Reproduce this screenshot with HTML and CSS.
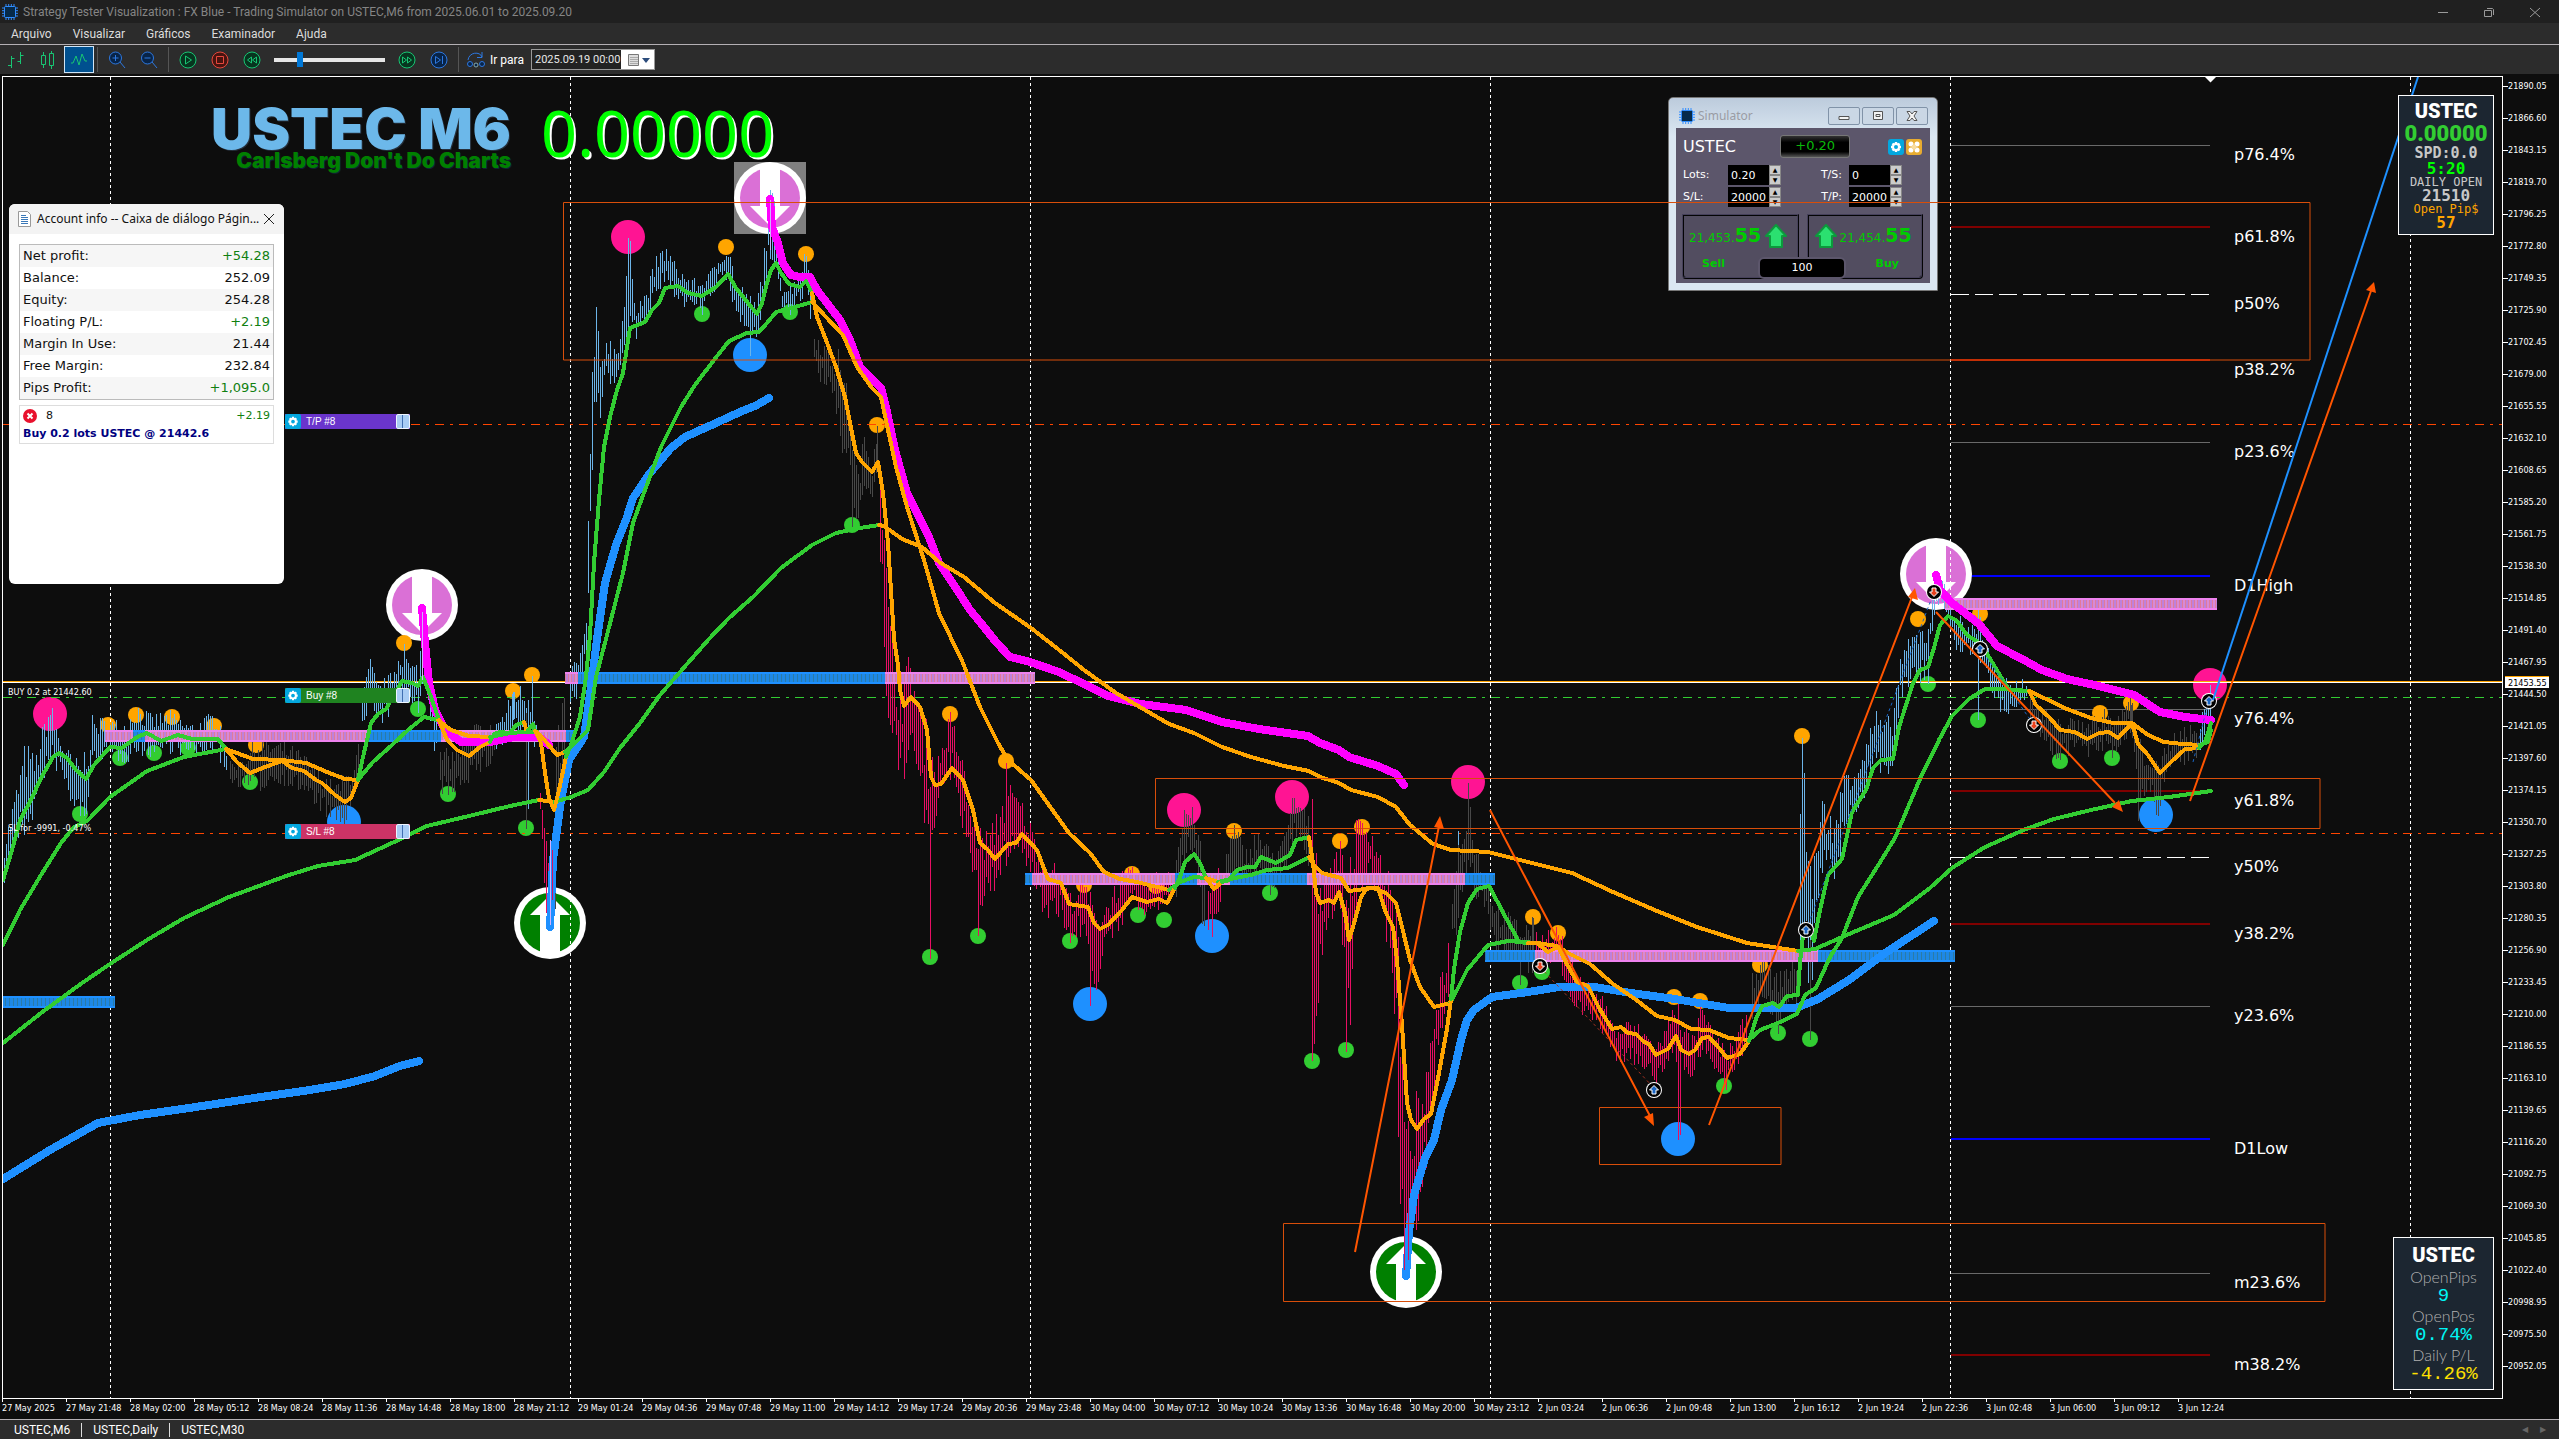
FILE: index.html
```html
<!DOCTYPE html>
<html lang="pt">
<head>
<meta charset="utf-8">
<title>Strategy Tester Visualization</title>
<link rel="stylesheet" href="styles.css">
</head>
<body>
<svg class="defs" aria-hidden="true">
  <symbol id="chip" viewBox="0 0 16 16"><path d="M4 0v16M6.7 0v16M9.3 0v16M12 0v16M0 4h16M0 6.700h16M0 9.300h16M0 12h16" stroke="#2f8cff" fill="none"/><rect x="2.500" y="2.500" width="11" height="11" rx="1" fill="#062a4a" stroke="#2f8cff"/></symbol>
  <symbol id="gear" viewBox="0 0 16 16"><path d="M8 3v10M3 8h10M4.500 4.500l7 7M11.500 4.500l-7 7" stroke="#fff" stroke-width="2.400"/><circle cx="8" cy="8" r="3" fill="#04a7de" stroke="#fff" stroke-width="2"/></symbol>
  <symbol id="up" viewBox="0 0 22 24"><path d="M11 1L21 12h-4v11H5V12H1z" fill="#2be070" stroke="#0c9a3c" stroke-width="2" stroke-linejoin="round"/></symbol>
</svg>

<header class="titlebar">
  <svg class="app-icon"><use href="#chip"/></svg>
  <h1>Strategy Tester Visualization : FX Blue - Trading Simulator on USTEC,M6 from 2025.06.01 to 2025.09.20</h1>
  <div class="caption-buttons">
    <button aria-label="Minimizar"><svg viewBox="0 0 12 12"><path d="M1 6.500h10"/></svg></button>
    <button aria-label="Restaurar"><svg viewBox="0 0 12 12"><path d="M1.500 4.500h7v6h-7zM4 2.500h5.500l1 1V9"/></svg></button>
    <button aria-label="Fechar"><svg viewBox="0 0 12 12"><path d="M1 2l10 9M11 2L1 11"/></svg></button>
  </div>
</header>

<nav class="menu">
  <a href="#">Arquivo</a><a href="#">Visualizar</a><a href="#">Gráficos</a><a href="#">Examinador</a><a href="#">Ajuda</a>
</nav>

<div class="toolbar">
  <button class="tool" aria-label="Barras"><svg viewBox="0 0 18 18" class="green"><path d="M4.500 5v12M1 14.500h3.500M4.500 7.500h3M13.500 1v12M10.500 10.500h3M13.500 4.500h3"/></svg></button>
  <button class="tool" aria-label="Velas"><svg viewBox="0 0 18 18" class="green"><path d="M4.500 1v3M4.500 14v3M2.500 4.500h4v9h-4zM12.500 0v2M12.500 15v3M10.500 2.500h4v12h-4z"/></svg></button>
  <button class="tool active" aria-label="Linha"><svg viewBox="0 0 18 18" class="green"><path d="M1 12h2l3-7 3 9 3-11 3 7h2"/></svg></button>
  <span class="sep"></span>
  <button class="tool" aria-label="Ampliar"><svg viewBox="0 0 18 18" class="blue"><circle cx="7.500" cy="7" r="6"/><path d="M4.500 7h6M7.500 4v6M12 11l5 6"/></svg></button>
  <button class="tool" aria-label="Reduzir"><svg viewBox="0 0 18 18" class="blue"><circle cx="7.500" cy="7" r="6"/><path d="M4.500 7h6M12 11l5 6"/></svg></button>
  <span class="sep"></span>
  <button class="tool" aria-label="Iniciar"><svg viewBox="0 0 18 18" class="green"><circle cx="9" cy="9" r="8"/><path d="M6.500 5l6 4-6 4z"/></svg></button>
  <button class="tool" aria-label="Parar"><svg viewBox="0 0 18 18" class="red"><circle cx="9" cy="9" r="8"/><path d="M5.500 5.500h7v7h-7z"/></svg></button>
  <button class="tool" aria-label="Mais lento"><svg viewBox="0 0 18 18" class="green"><circle cx="9" cy="9" r="8"/><path d="M8.500 6l-4 3 4 3zM13.500 6l-4 3 4 3z"/></svg></button>
  <input class="speed" type="range" min="0" max="100" value="22" aria-label="Velocidade">
  <button class="tool" aria-label="Mais rápido"><svg viewBox="0 0 18 18" class="green"><circle cx="9" cy="9" r="8"/><path d="M4.500 6l4 3-4 3zM9.500 6l4 3-4 3z"/></svg></button>
  <button class="tool" aria-label="Avançar"><svg viewBox="0 0 18 18" class="blue"><circle cx="9" cy="9" r="8"/><path d="M5.500 5.500l5 3.500-5 3.500zM12.500 5v8"/></svg></button>
  <span class="sep"></span>
  <svg class="jump blue" viewBox="0 0 20 18"><path d="M2 9C3 1 14 0 16 6M16 1v5.500h-5"/><circle cx="4" cy="13" r="2.500"/><circle cx="16" cy="13" r="2.500"/><circle cx="10" cy="14" r="2" stroke="#8aa"/></svg>
  <label for="goto">Ir para</label>
  <div class="date-box">
    <input id="goto" value="2025.09.19 00:00">
    <button aria-label="Calendário"><svg viewBox="0 0 26 18"><path d="M3.500 3.500h10v11h-10z" fill="#ddd" stroke="#777"/><path d="M5 6.500h8M5 8.500h8M5 10.500h8M5 12.500h8" stroke="#aaa"/><path d="M17 7h8l-4 5z" fill="#2c4c7c"/></svg></button>
  </div>
</div>

<main class="workspace">
  <section class="plot" aria-label="Gráfico USTEC M6">
    <svg class="layer" viewBox="3 77 2499 1321" preserveAspectRatio="none">
      <defs>
        <pattern id="pinkband" width="6" height="12" patternUnits="userSpaceOnUse"><path d="M0 0h6v12H0z" fill="#d58ad8"/><path d="M1.500 0v12M4.500 0v12" stroke="#e07a9c"/><path d="M3 0v12" stroke="#a878e0"/></pattern>
        <pattern id="blueband" width="4" height="12" patternUnits="userSpaceOnUse"><path d="M0 0h4v12H0z" fill="#1e88e5"/><path d="M1.500 0v12" stroke="#2a7ba8"/></pattern>
        <g id="down"><circle r="36" fill="#fff"/><circle r="30" fill="#da70d6"/><path d="M-10-31h20V8h10L0 28-20 8h10z" fill="#fff"/></g>
        <g id="rise"><circle r="36" fill="#fff"/><circle r="30" fill="#008000"/><path d="M-10 31h20V-8h10L0-28-20-8h10z" fill="#fff"/></g>
        <g id="tradebuy"><circle r="8" fill="#fff"/><circle r="7" fill="#000"/><path d="M0-4.500L4.500 0H2v4h-4V0h-2.500z" fill="#1a66c4" stroke="#fff"/></g>
        <g id="tradesell"><circle r="8" fill="#fff"/><circle r="7" fill="#000"/><path d="M0 4.500L4.500 0H2v-4h-4V0h-2.500z" fill="#e8401c" stroke="#fff"/></g>
      </defs>
      <g id="levels"></g>
      <rect x="734" y="162" width="72" height="72" fill="#808080"/>
      <use href="#down" x="422" y="605"/><use href="#down" x="770" y="198"/><use href="#down" x="1936" y="574"/>
      <use href="#rise" x="550" y="923"/><use href="#rise" x="1406" y="1272"/>
      <g id="dots"></g>
      <path d="M110.500 77V1398M570.500 77V1398M1030.500 77V1398M1490.500 77V1398M1950.500 77V1398M2410.500 77V1398" stroke="#fff" stroke-dasharray="3 3"/>
      <path d="M2205 77h11l-5.500 5.500z" fill="#fff"/>
      <path d="M3 681.500H2502" stroke="#ffa500"/><path d="M3 682.500H2502" stroke="#fff"/>
      <path d="M3 697.500H2502" stroke="#32cd32" stroke-dasharray="9 6 3 6"/>
      <path d="M3 424.500H2502M3 833.500H2502" stroke="#ff4500" stroke-dasharray="9 6 3 6"/>
      <g id="bars" fill="none"></g>
      <g id="bands"></g>
      <g id="averages" fill="none" stroke-linejoin="round" stroke-linecap="round" shape-rendering="crispEdges"></g>
      <path d="M422.500 612V680M770.500 200V250M550.500 840V925" stroke="#d0b0ff"/>
      <path d="M1404.500 1200V1270M1408.500 1180V1260M552.500 850V900" stroke="#d80f5c"/>
      <g fill="none" stroke-dasharray="3 3"><path d="M1540 967L1654 1088" stroke="#a03020"/><path d="M1806 930L1934 592M1980 648L2034 725M2193 762L2209 700" stroke="#1a66c4"/></g>
      <use href="#tradesell" x="1540" y="966"/><use href="#tradesell" x="1934" y="592"/><use href="#tradesell" x="2034" y="725"/>
      <use href="#tradebuy" x="1654" y="1090"/><use href="#tradebuy" x="1806" y="930"/><use href="#tradebuy" x="1980" y="649"/><use href="#tradebuy" x="2209" y="701"/>
      <g id="labels" class="level-label"></g>
      <g class="order-label"><text x="8" y="695">BUY 0.2 at 21442.60</text><text x="8" y="831">SL for -9991, -0.47%</text></g>
    </svg>

    <div class="brand">
      <div class="brand-names"><strong>USTEC M6</strong><em>Carlsberg Don't Do Charts</em></div>
      <output>0.00000</output>
    </div>

    <div class="tag tag-tp"><button aria-label="Opções"><svg><use href="#gear"/></svg></button><span>T/P #8</span><i></i></div>
    <div class="tag tag-buy"><button aria-label="Opções"><svg><use href="#gear"/></svg></button><span>Buy #8</span><i></i></div>
    <div class="tag tag-sl"><button aria-label="Opções"><svg><use href="#gear"/></svg></button><span>S/L #8</span><i></i></div>

    <section class="account">
      <header>
        <svg class="doc" viewBox="0 0 13 16"><path d="M.5.5h9l3 3v12H.5z" fill="#fff" stroke="#999"/><path d="M3 4.500h5M3 6.500h7M3 8.500h7M3 10.500h7M3 12.500h7" stroke="#3a78b8"/></svg>
        <h2>Account info -- Caixa de diálogo Págin...</h2>
        <button aria-label="Fechar"><svg viewBox="0 0 12 12"><path d="M1 1l10 10M11 1L1 11" stroke="#222" fill="none"/></svg></button>
      </header>
      <table>
        <tr><th>Net profit:</th><td class="gain">+54.28</td></tr>
        <tr><th>Balance:</th><td>252.09</td></tr>
        <tr><th>Equity:</th><td>254.28</td></tr>
        <tr><th>Floating P/L:</th><td class="gain">+2.19</td></tr>
        <tr><th>Margin In Use:</th><td>21.44</td></tr>
        <tr><th>Free Margin:</th><td>232.84</td></tr>
        <tr><th>Pips Profit:</th><td class="gain">+1,095.0</td></tr>
      </table>
      <div class="position">
        <div class="position-head">
          <button aria-label="Fechar posição"><svg viewBox="0 0 14 14"><circle cx="7" cy="7" r="7" fill="#e8112d"/><path d="M4.500 4.500l5 5M9.500 4.500l-5 5" stroke="#fff" stroke-width="2"/></svg></button>
          <span>8</span><span class="gain">+2.19</span>
        </div>
        <strong>Buy 0.2 lots USTEC @ 21442.6</strong>
      </div>
    </section>

    <section class="simulator">
      <header>
        <svg class="app-icon"><use href="#chip"/></svg><h2>Simulator</h2>
        <div class="sim-caption">
          <button aria-label="Minimizar"><svg viewBox="0 0 14 12"><path d="M2 6.500h10v3H2z"/></svg></button>
          <button aria-label="Maximizar"><svg viewBox="0 0 14 12"><path d="M2.500 1.500h9v8h-9zM5 4.500h4v2H5z"/></svg></button>
          <button aria-label="Fechar"><svg viewBox="0 0 14 12"><path d="M2 1.500h3l2 2.500 2-2.500h3L9 6l3 4.500H9L7 8l-2 2.500H2L5 6z"/></svg></button>
        </div>
      </header>
      <div class="sim-body">
        <div class="sim-top">
          <strong>USTEC</strong><output>+0.20</output>
          <button class="gear" aria-label="Configurações"><svg><use href="#gear"/></svg></button>
          <button class="grid" aria-label="Layout"><svg viewBox="0 0 16 16"><g fill="#fff"><circle cx="5" cy="5" r="2.500"/><circle cx="11" cy="5" r="2.500"/><circle cx="5" cy="11" r="2.500"/><circle cx="11" cy="11" r="2.500"/></g><circle cx="8" cy="8" r="2.500" fill="#f8dca0"/></svg></button>
        </div>
        <div class="sim-fields">
          <label for="lots">Lots:</label><div class="num"><input id="lots" value="0.20"><span><button aria-label="Mais">▲</button><button aria-label="Menos">▼</button></span></div>
          <label for="ts" class="right">T/S:</label><div class="num"><input id="ts" value="0"><span><button aria-label="Mais">▲</button><button aria-label="Menos">▼</button></span></div>
          <label for="sl">S/L:</label><div class="num"><input id="sl" value="20000"><span><button aria-label="Mais">▲</button><button aria-label="Menos">▼</button></span></div>
          <label for="tp" class="right">T/P:</label><div class="num"><input id="tp" value="20000"><span><button aria-label="Mais">▲</button><button aria-label="Menos">▼</button></span></div>
        </div>
        <div class="quotes">
          <button class="quote"><span class="price">21,453.<b>55</b><svg><use href="#up"/></svg></span><span class="side">Sell</span></button>
          <button class="quote buy"><span class="price"><svg><use href="#up"/></svg>21,454.<b>55</b></span><span class="side">Buy</span></button>
          <output class="spread">100</output>
        </div>
      </div>
    </section>

    <svg class="layer drawings" viewBox="3 77 2499 1321" preserveAspectRatio="none">
      <g fill="none" stroke="#d84e0a">
        <path d="M563.500 202.500H2310V360H563.500zM1155.500 778.500H2320V828.500H1155.500zM1599.500 1107.500H1781V1164.500H1599.500zM1283.500 1223.500H2325V1301.500H1283.500z"/>
      </g>
      <path d="M2213 700L2418 77" stroke="#1e90ff" stroke-width="2"/>
      <g stroke="#ff5500" stroke-width="2" fill="#ff5500">
        <path d="M1355 1252L1439 826M1490 810L1650 1116M1709 1125L1912 597M1936 612L2115 803M2190 801L2371 291"/>
        <path stroke="none" d="M1440 816L1444 829 1434 827zM1654 1126L1644 1117 1653 1113zM1915 588L1918 600 1908 597zM2123 812L2112 807 2119 800zM2374 282L2376 293 2366 290z"/>
      </g>
    </svg>

    <aside class="board board-top">
      <b class="name">USTEC</b><b class="rate">0.00000</b><b class="silver">SPD:0.0</b><b class="timer">5:20</b>
      <span class="small">DAILY OPEN</span><b class="open">21510</b><span class="small amber">Open Pip$</span><b class="amber">57</b>
    </aside>
    <aside class="board board-bottom">
      <b class="name">USTEC</b><span class="thin">OpenPips</span><span class="lcd">9</span><span class="thin">OpenPos</span><span class="lcd">0.74%</span><span class="thin">Daily P/L</span><span class="lcd yellow">-4.26%</span>
    </aside>
  </section>
  <div class="price-axis"><ol id="prices"></ol><span class="last-price">21453.55</span></div>
  <ol class="time-axis" id="times"></ol>
</main>

<footer class="tabs">
  <a href="#">USTEC,M6</a><a href="#">USTEC,Daily</a><a href="#">USTEC,M30</a>
  <span class="tab-arrows"><i>◀</i><i>▶</i></span>
</footer>
<script src="chart.js"></script>
</body>
</html>
```
FILE: styles.css
```css
* { box-sizing: border-box; }
body {
  margin: 0;
  height: 100vh;
  display: flex;
  flex-direction: column;
  overflow: hidden;
  background: #0d0d0d;
  color: #fff;
  font: 12px/16px Roboto, "Open Sans", sans-serif;
}
h1, h2, ol, table { margin: 0; padding: 0; font: inherit; list-style: none; }
a { color: inherit; text-decoration: none; }
button { padding: 0; border: 0; background: none; color: inherit; font: inherit; }
svg { display: block; flex: none; }
.defs { position: absolute; width: 0; height: 0; }
.app-icon { width: 16px; height: 16px; }

.titlebar { display: flex; align-items: center; gap: 5px; height: 23px; padding: 0 2px; background: #202020; color: #858585; flex: none; }
.caption-buttons { display: flex; gap: 1px; margin-left: auto; }
.caption-buttons button { width: 45px; height: 16px; display: grid; place-items: center; }
.caption-buttons svg { width: 12px; height: 12px; fill: none; stroke: #9a9a9a; }

.menu { display: flex; align-items: center; gap: 21px; height: 21px; padding: 0 11px; background: #2c2c2c; color: #dcdcdc; flex: none; }

.toolbar { display: flex; align-items: center; height: 30px; border-top: 1px solid #b4b0b4; background: #2c2c2c; flex: none; }
.tool { width: 32px; height: 27px; display: grid; place-items: center; }
.tool svg { width: 18px; height: 18px; }
.tool.active { width: 30px; background: #00508f; border: 1px solid #cfe4f5; }
.toolbar .green { fill: none; stroke: #18c573; }
.toolbar .green circle { fill: #07351f; }
.toolbar .blue { fill: none; stroke: #2d78e0; }
.toolbar .blue circle { fill: #082448; }
.toolbar .red { fill: none; stroke: #e8483c; }
.toolbar .red circle { fill: #481410; }
.sep { width: 1px; height: 25px; margin: 0 3px; background: #555; }
.speed { appearance: none; width: 111px; height: 4px; margin: 0 6px; background: #e6e6e6; }
.speed::-webkit-slider-thumb { appearance: none; width: 6px; height: 15px; background: #0078d7; }
.jump { width: 20px; height: 18px; margin: 0 4px; }
.toolbar label { width: 36px; }
.date-box { display: flex; width: 124px; height: 21px; margin-left: 5px; border: 1px solid #999; }
.date-box input { flex: 1; min-width: 0; padding: 0 0 0 3px; border: 0; background: #222; color: #e6e6e6; font: 11px Roboto, sans-serif; }
.date-box button { width: 33px; background: #fff; display: grid; place-items: center; }
.date-box svg { width: 26px; height: 18px; }

.workspace { flex: 1; min-height: 0; display: grid; grid-template: minmax(0, 1fr) 20px / minmax(0, 1fr) 56px; padding: 2px 0 0 2px; }
.plot { position: relative; border: 1px solid #fff; overflow: hidden; }
.layer { position: absolute; inset: 0; width: 100%; height: 100%; }
.level-label { font: 16px "DejaVu Sans", sans-serif; fill: #fff; }
.order-label { font: 9px "DejaVu Sans Condensed", "DejaVu Sans", sans-serif; fill: #fff; }

.price-axis, .time-axis { font: 9px/12px "DejaVu Sans Condensed", "DejaVu Sans", sans-serif; }
.price-axis { position: relative; overflow: hidden; }
.price-axis ol { margin-top: -6px; }
.price-axis li { display: flex; align-items: center; height: 32px; }
.price-axis li::before { content: ""; width: 5px; height: 1px; background: #fff; }
.last-price { position: absolute; left: 2px; top: 600px; width: 44px; height: 12px; padding-left: 3px; border-top: 1px solid #ffa500; background: #fff; color: #000; }
.time-axis { display: flex; overflow: hidden; grid-column: 1 / -1; }
.time-axis li { flex: none; width: 64px; white-space: nowrap; }
.time-axis li::before { content: ""; display: block; width: 1px; height: 3px; background: #fff; }

.brand { position: absolute; left: 208px; top: 20px; display: flex; gap: 30px; }
.brand-names { display: flex; flex-direction: column; align-items: flex-end; font-family: Inter, "Open Sans", sans-serif; font-weight: 900; }
.brand strong { margin-top: 9px; font-size: 57px; line-height: 46px; font-weight: 900; color: #6cb8ea; text-shadow: 1px 1px #26303c; }
.brand em { font-size: 21px; line-height: 18px; font-style: normal; color: #008000; text-shadow: 1px 1px #123; }
.brand output { font: 63px/72px "Noto Sans", sans-serif; color: #0f0; text-shadow: 2px 2px #fff; }

.tag { position: absolute; left: 282px; width: 125px; height: 15px; display: flex; font: 10px/15px "Liberation Sans", sans-serif; }
.tag button { width: 16px; background: #04a7de; border-radius: 2px; }
.tag svg { width: 16px; height: 15px; }
.tag span { flex: 1; padding-left: 5px; }
.tag i { width: 14px; border: 1px solid #eef5ff; border-radius: 2px; background: linear-gradient(90deg, #a8ccf4 5px, #3f6eb0 5px, #3f6eb0 6px, #a8ccf4 6px); }
.tag-tp { top: 337px; background: #6a35cc; }
.tag-buy { top: 611px; background: #1f8320; }
.tag-sl { top: 747px; background: #cc3366; }

.account { position: absolute; left: 6px; top: 127px; width: 275px; height: 380px; border-radius: 6px; overflow: hidden; background: #fff; color: #111; font: 13px/22px "DejaVu Sans", sans-serif; }
.account header { display: flex; align-items: center; height: 30px; padding: 0 9px; background: #f3f3f3; font: 12px/16px "Noto Sans", sans-serif; }
.doc { width: 13px; height: 16px; }
.account h2 { margin-left: 6px; white-space: nowrap; }
.account header button { margin-left: auto; }
.account header button svg { width: 12px; height: 12px; }
.account table { width: 255px; margin: 10px 10px 0; border: 1px solid #bbb; border-collapse: collapse; }
.account tr:nth-child(odd) { background: #f6f6f6; }
.account th { font-weight: 400; text-align: left; padding: 0 3px; }
.account td { text-align: right; padding: 0 3px; }
.account .gain { color: #108010; }
.position { width: 255px; margin: 5px 10px; padding: 0 3px 1px; border: 1px solid #ddd; font-size: 11px; line-height: 18px; }
.position-head { display: flex; align-items: center; gap: 9px; height: 20px; }
.position-head svg { width: 14px; height: 14px; }
.position-head .gain { margin-left: auto; }
.position strong { display: block; height: 16px; line-height: 16px; color: #000080; }

.simulator { position: absolute; left: 1665px; top: 20px; width: 270px; height: 194px; padding: 0 8px 8px; border: 1px solid #777; border-radius: 5px 5px 0 0; background: linear-gradient(#bccbdc, #dbe7f2 20%); font-family: "DejaVu Sans", sans-serif; }
.simulator header { display: flex; align-items: center; gap: 3px; height: 30px; padding: 6px 0 0 2px; color: #9a9ca4; font: 12px/16px "Noto Sans", sans-serif; }
.sim-caption { display: flex; gap: 2px; margin-left: auto; padding-right: 1px; }
.sim-caption button { width: 32px; height: 18px; border: 1px solid #8193a8; border-radius: 2px; background: #cad7e5; display: grid; place-items: center; }
.sim-caption svg { width: 14px; height: 12px; fill: #f4f4f4; stroke: #555; }
.sim-body { height: 155px; margin: 0 -1px; padding: 7px 6px 0; background: #5c566b; }
.sim-top { display: flex; align-items: center; height: 23px; }
.sim-top strong { width: 99px; padding-left: 1px; font-size: 16px; font-weight: 400; }
.sim-top output { width: 70px; height: 23px; margin-right: 38px; border: 1px solid #777; border-radius: 3px; background: linear-gradient(#333, #000 30%, #000 75%, #555); color: #0ab80a; font-size: 13px; line-height: 20px; text-align: center; }
.sim-top button { width: 16px; height: 16px; margin-right: 2px; border-radius: 3px; }
.sim-top button svg { width: 16px; height: 16px; }
.gear { background: #04a7de; }
.grid { background: #e8ac30; }
.sim-fields { display: grid; grid-template-columns: 46px 53px 68px 53px; gap: 2px 0; padding: 7px 0; font-size: 11px; line-height: 20px; }
.sim-fields label { padding-left: 1px; }
.sim-fields .right { padding-right: 7px; text-align: right; }
.num { display: flex; height: 20px; }
.num input { width: 41px; padding: 0 3px; border: 0; background: #000; color: #fff; font: 11px "DejaVu Sans", sans-serif; }
.num span { width: 12px; }
.num button { display: block; width: 12px; height: 10px; border: 1px solid #888; background: #ccc; color: #000; font-size: 6px; line-height: 6px; }
.quotes { position: relative; display: flex; gap: 8px; height: 65px; padding-right: 1px; }
.quote { flex: 1; height: 65px; border: 2px ridge #45405a; border-radius: 0 0 4px 4px; background: #524d60; color: #0c0; display: flex; flex-direction: column; text-align: left; }
.price { display: flex; align-items: baseline; height: 40px; padding-left: 5px; font-size: 12px; line-height: 38px; }
.price b { font-size: 19px; font-weight: 700; }
.price svg { width: 22px; height: 24px; align-self: center; margin-left: 4px; }
.buy .price { padding-left: 3px; }
.buy .price svg { margin: 0 3px; }
.side { padding: 0 18px; font-size: 11px; font-weight: 700; line-height: 16px; }
.buy .side { text-align: right; padding-right: 22px; }
.spread { position: absolute; left: 76px; top: 43px; width: 88px; height: 22px; border: 2px solid #5c566b; border-radius: 6px; background: #000; color: #fff; font-size: 11px; line-height: 18px; text-align: center; }

.board { position: absolute; display: flex; flex-direction: column; align-items: center; border: 1px solid #fff; background: #1c2631; font-family: "DejaVu Sans Mono", monospace; white-space: nowrap; }
.board .name { font: 900 20px/22px Roboto, sans-serif; }
.board-top { right: 8px; top: 18px; width: 96px; height: 140px; padding-top: 4px; color: #c8c8c8; font-size: 16px; line-height: 14px; }
.board-top .name { color: #fff; }
.board-top .rate { font: 900 22px/24px Roboto, sans-serif; color: #32cd32; }
.board-top .silver { font-size: 15px; line-height: 15px; }
.board-top .timer { color: #0f0; line-height: 15px; }
.board-top .small { font-size: 12px; line-height: 13px; }
.board-top .amber { color: #ffa500; }
.board-bottom { right: 8px; bottom: 8px; width: 101px; height: 153px; padding-top: 6px; }
.thin { color: #b0b0b0; font: 300 16px/21px Lato, sans-serif; }
.lcd { color: #00f5f5; font: 19px/18px "Liberation Mono", monospace; }
.lcd.yellow { color: #ffe000; }

.tabs { display: flex; align-items: center; height: 20px; padding: 0 3px; border-top: 1px solid #b4b0b4; background: #2c2c2c; flex: none; }
.tabs a { padding: 0 11px; border-left: 1px solid #ddd; line-height: 14px; }
.tabs a:first-child { border: 0; }
.tab-arrows { display: flex; gap: 12px; margin-left: auto; padding-right: 10px; color: #666; font-size: 8px; }
.tab-arrows i { font-style: normal; }
```
FILE: chart.js
```js
const NS = 'http://www.w3.org/2000/svg';
const $ = id => document.getElementById(id);
function add(parent, tag, attrs, text) {
  const el = document.createElementNS(NS, tag);
  for (const k in attrs) el.setAttribute(k, attrs[k]);
  if (text) el.textContent = text;
  parent.appendChild(el);
}

// Axis labels
for (let i = 0; i <= 40; i++) {
  const li = document.createElement('li');
  li.textContent = (21890.05 - 23.45 * i).toFixed(2);
  $('prices').appendChild(li);
}
('27 May 2025,27 May 21:48,28 May 02:00,28 May 05:12,28 May 08:24,28 May 11:36,28 May 14:48,28 May 18:00,28 May 21:12,' +
 '29 May 01:24,29 May 04:36,29 May 07:48,29 May 11:00,29 May 14:12,29 May 17:24,29 May 20:36,29 May 23:48,30 May 04:00,' +
 '30 May 07:12,30 May 10:24,30 May 13:36,30 May 16:48,30 May 20:00,30 May 23:12,2 Jun 03:24,2 Jun 06:36,2 Jun 09:48,' +
 '2 Jun 13:00,2 Jun 16:12,2 Jun 19:24,2 Jun 22:36,3 Jun 02:48,3 Jun 06:00,3 Jun 09:12,3 Jun 12:24').split(',').forEach(t => {
  const li = document.createElement('li');
  li.textContent = t;
  $('times').appendChild(li);
});

// Fibonacci and daily levels: label, y, colour, thickness
[['p76.4%', 145, '#696969', 1], ['p61.8%', 227, '#800000', 2], ['p50%', 294, '#fff', 1], ['p38.2%', 360, '#b01000', 2],
 ['p23.6%', 442, '#696969', 1], ['D1High', 576, '#0000ff', 2], ['y76.4%', 709, '#696969', 1], ['y61.8%', 791, '#800000', 2],
 ['y50%', 857, '#fff', 1], ['y38.2%', 924, '#800000', 2], ['y23.6%', 1006, '#696969', 1], ['D1Low', 1139, '#0000ff', 2],
 ['m23.6%', 1273, '#696969', 1], ['m38.2%', 1355, '#800000', 2]].forEach(([name, y, stroke, w]) => {
  const at = w === 1 ? y + 0.5 : y;
  add($('levels'), 'path', { d: `M1951 ${at}H2210`, stroke, 'stroke-width': w, 'stroke-dasharray': name.endsWith('50%') ? '18 6' : 'none' });
  add($('labels'), 'text', { x: 2234, y: y + 15 }, name);
});

// Swing dots
const dots = {
  '#ffa500': [8, '404,643 108,725 136,715 172,717 214,726 256,745 513,691 532,675 726,247 806,254 877,425 950,714 1006,761 1132,874 1084,885 1156,886 1234,831 1340,841 1362,827 1533,917 1558,933 1674,997 1700,1001 1760,965 1802,736 1918,619 1980,614 2100,713 2131,703'],
  '#32cd32': [8, '80,814 120,758 154,753 188,748 250,782 418,709 448,794 526,828 702,314 790,312 852,525 930,957 978,936 1070,941 1138,915 1164,920 1270,893 1312,1061 1346,1050 1520,983 1542,972 1724,1086 1778,1033 1810,1039 1928,684 1978,720 2060,761 2112,758'],
  '#ff1493': [17, '50,714 628,237 1184,810 1292,797 1468,782 2210,685'],
  '#1e90ff': [17, '344,822 750,355 1090,1004 1212,936 1678,1139 2156,815']
};
for (const fill in dots) {
  const [r, list] = dots[fill];
  list.split(' ').forEach(p => {
    const [cx, cy] = p.split(',');
    add($('dots'), 'circle', { cx, cy, r, fill });
  });
}

// Daily open bands: x1, x2, y, kind
[[3, 115, 996, 'b'], [105, 367, 730, 'p'], [133, 145, 730, 'b'], [367, 441, 730, 'b'], [441, 566, 730, 'p'], [566, 575, 730, 'b'],
 [565, 578, 672, 'p'], [578, 885, 672, 'b'], [885, 1035, 672, 'p'], [1025, 1032, 873, 'b'], [1032, 1175, 873, 'p'],
 [1175, 1197, 873, 'b'], [1197, 1230, 873, 'p'], [1230, 1307, 873, 'b'], [1307, 1465, 873, 'p'], [1465, 1495, 873, 'b'],
 [1485, 1535, 950, 'b'], [1535, 1818, 950, 'p'], [1818, 1955, 950, 'b'], [1945, 2217, 598, 'p']].forEach(([x, x2, y, k]) => {
  add($('bands'), 'rect', { x, y, width: x2 - x, height: 12, fill: k === 'p' ? '#ee82ee' : '#1e90ff' });
  add($('bands'), 'rect', { x, y: y + 2, width: x2 - x, height: 8, fill: k === 'p' ? 'url(#pinkband)' : 'url(#blueband)' });
});

// Moving averages: each run starts with its colour letter
const ink = { g: '#32cd32', o: '#ffa500', m: '#ff00ff', b: '#1e90ff' };
function average(width, data) {
  let last = '';
  data.trim().split(/\s+(?=[gomb])/).forEach(run => {
    const pts = run.slice(1).trim();
    add($('averages'), 'polyline', { points: (last + ' ' + pts).trim(), stroke: ink[run[0]], 'stroke-width': width });
    last = pts.split(' ').pop();
  });
}
average(8, 'b 3,1179 50,1150 98,1123 140,1115 189,1108 261,1097 310,1090 345,1084 375,1076 400,1066 419,1061');
average(8, 'b 550,927 553,860 561,800 569,760 584,737 591,687 597,639 605,583 616,545 626,520 633,498 650,473 671,448 685,437 716,423 740,412 755,406 769,398');
average(8, 'b 1406,1276 1409,1232 1414,1195 1425,1158 1434,1140 1441,1110 1452,1080 1461,1040 1467,1020 1474,1010 1492,997 1528,992 1559,987 1595,987 1631,993 1675,999 1729,1008 1796,1008 1818,999 1849,980 1885,953 1934,921');
average(8, 'm 422,608 425,643 429,683 435,710 445,730 461,742 490,742 514,737 539,737 549,745');
average(8, 'm 770,199 772,227 778,243 783,263 791,275 800,277 810,277 817,290 840,320 850,340 860,367 881,388 886,407 895,450 907,493 929,537 939,563 954,585 970,610 980,622 996,642 1010,657 1027,661 1059,672 1084,684 1108,696 1141,704 1186,710 1222,722 1259,729 1308,736 1320,743 1339,750 1349,757 1378,766 1396,774 1404,785');
average(8, 'm 1936,575 1940,590 1952,603 1979,624 1997,646 2022,659 2042,670 2067,679 2099,686 2134,695 2160,712 2185,717 2211,720');
average(4, `g 3,1043 41,1013 82,983 110,964 147,940 184,918 229,897 286,876 318,866 355,860 392,843 427,826 469,816 510,806 539,800
 o 554,802 g 571,797 588,790 604,772 620,748 640,723 660,695 680,672 709,639 729,618 753,597 781,568 812,545 836,533 860,528 879,525
 o 884,526 902,539 922,547 939,562 964,577 995,603 1031,628 1063,653 1084,670 1116,693 1145,710 1169,724 1194,733 1222,747 1251,757 1284,766 1309,771 1320,777 1339,783 1351,790 1378,797 1396,807 1410,825 1433,844 1451,850 1488,852 1528,862 1572,873 1613,892 1657,911 1697,927 1747,943 1798,951
 g 1815,949 1849,934 1894,915 1930,888 1952,868 1985,847 2026,829 2054,819 2091,810 2132,801 2169,797 2211,791`);
average(4, `g 3,945 20,910 41,875 61,843 73,828 88,820 110,797 147,771 184,757 226,749 o 253,759 282,760 306,763 327,772 345,779 358,780
 g 373,762 392,745 408,730 424,717 438,720 o 451,730 469,736 490,737 g 510,733 524,732 537,732 o 547,743 557,755 565,752
 g 571,747 588,730 596,677 606,639 623,573 633,523 645,490 661,447 681,407 695,385 714,360 729,341 747,333 759,332 767,323 776,312 795,307 812,302
 o 826,317 843,335 857,367 872,388 881,397 888,430 896,467 907,507 915,532 924,560 939,613 963,663 980,707 998,743 1008,760 1031,780 1051,808 1069,833 1090,853 1104,872 1120,879 1137,882 1169,890
 g 1180,882 1194,877 1206,878 o 1218,882 g 1235,878 1251,875 1267,870 1288,868 1309,857 o 1314,865 1322,873 1341,878 1349,891 1373,888 1386,893 1396,903 1402,927 1410,960 1420,987 1434,1007 1450,1003
 g 1457,990 1467,970 1488,945 1508,941 1537,943 o 1557,946 1568,953 1590,964 1613,984 1635,999 1657,1016 1675,1020 1691,1029 1709,1030 1729,1038 1749,1040
 g 1760,1030 1778,1023 1797,1014 1805,995 1816,988 1830,957 1842,938 1858,897 1879,864 1895,838 1920,779 1940,738 1952,716 1969,699 1985,689 2005,689 2029,691
 o 2046,699 2067,709 2091,718 2113,723 2132,723 2148,735 2164,742 2183,744 2200,745 g 2208,742 2211,730`);
average(4, `g 3,880 12,850 20,820 31,800 41,778 53,757 59,753 67,758 76,770 86,779 94,765 110,747 122,748 137,737 147,733 161,741 178,735 192,739 218,739 226,749
 o 237,762 250,773 265,767 282,761 292,768 304,771 316,780 322,783 335,795 345,802 351,798 358,780 g 363,757 371,723 378,714 386,709 402,681 412,683 418,686 423,677 431,697 439,720
 o 447,740 457,750 469,756 480,747 490,742 g 494,734 500,732 510,733 516,725 524,722 o 527,732 g 533,724 535,731 o 541,743 545,773 549,798 554,810 559,790 566,757
 g 571,745 580,717 586,677 590,635 594,563 599,500 604,447 610,417 617,390 623,373 630,328 645,322 652,310 659,303 665,288 678,286 688,293 702,296 716,287 728,274 736,288 748,303 757,314 762,303 767,283 771,270 776,263 781,273 789,284 800,287 806,281 812,293
 o 817,317 826,340 836,367 845,397 852,433 856,453 862,462 872,472 878,462 883,493 888,543 894,639 898,665 900,690 904,706 911,697 920,707 927,730 931,777 935,785 941,784 952,768 963,780 973,810 980,843 988,850 995,859 1008,844 1016,843 1022,834 1037,850 1048,879 1061,883 1069,904 1088,907 1094,923 1100,929 1108,925 1122,910 1132,897 1147,902 1159,899 1167,903 1175,888
 g 1180,877 1185,862 1194,854 1200,863 1206,878 o 1214,889 1222,882 g 1229,880 1237,870 1247,867 1255,867 1261,857 1276,863 1290,855 1296,840 1309,837
 o 1313,863 1316,893 1320,903 1329,900 1334,903 1339,892 1345,913 1349,940 1355,920 1361,897 1367,888 1378,888 1386,913 1393,927 1397,960 1402,1025 1407,1103 1411,1120 1417,1129 1424,1119 1431,1114 1439,1073 1447,1029 1451,999
 g 1454,969 1460,932 1468,903 1477,889 1489,886 1497,901 1506,918 1512,929 1519,942 1528,943 o 1537,943 1548,952 1558,947 1568,966 1577,982 1588,986 1599,1008 1612,1029 1621,1027 1628,1033 1636,1034 1644,1042 1649,1044 1656,1055 1668,1049 1676,1036 1681,1050 1689,1054 1695,1050 1702,1038 1709,1037 1720,1049 1727,1058 1740,1054 1749,1041
 g 1756,1019 1762,1006 1773,1003 1779,1007 1787,996 1798,995 1800,962 1803,936 1810,929 1814,941 1820,910 1828,875 1842,859 1852,812 1866,790 1873,768 1881,760 1893,759 1899,727 1913,683 1920,670 1928,667 1934,648 1940,625 1948,616 1956,620 1967,635 1981,644 1989,657 2001,677 2009,690 2029,691
 o 2036,705 2050,718 2060,730 2075,732 2087,739 2099,733 2109,732 2118,738 2132,723 2138,744 2148,755 2160,773 2171,762 2185,749 2199,748 g 2205,742 2211,723`);

// Price bars: colour run, then x,mid,half-range knots; bars are spaced two pixels apart
const runs = `
b 3,865,15 15,820,20 25,790,35 35,785,20 45,745,22 50,735,25 60,755,12 70,780,20 80,790,20 88,775,30 92,745,20 100,738,15 125,742,15 136,728,20 150,735,15 170,732,15 190,740,12 215,732,15 222,745,15 228,770,8
d 229,773,8 240,773,10 256,765,20 280,762,15 300,772,15 320,790,15 335,805,15 345,800,20 352,785,15 360,755,15
b 361,720,20 370,680,15 378,705,15 390,695,15 400,670,18 410,680,12 418,690,20 424,650,35 430,700,20 438,750,20
d 439,770,15 448,775,18 460,765,15 475,750,20 490,745,15 495,740,12
b 496,735,12 505,728,12 513,710,20 524,715,20 532,720,20 537,735,10
p 540,800,20 545,870,30 550,900,30 555,870,30
d 556,820,50 560,780,50 566,720,30
b 569,690,15 580,670,15 586,640,15 588,560,30 592,423,50 596,360,40 600,390,20 606,355,15 615,370,20 620,350,15 626,310,25 630,285,30 636,320,15 645,310,12 655,280,15 665,265,15 675,280,12 690,295,12 700,295,10 710,285,10 722,265,12 728,265,15 736,300,15 748,310,12 756,325,15 762,290,20 768,240,25 772,220,30 776,245,15 782,300,12 790,300,12 800,285,15 806,265,12 812,330,20
d 814,350,15 830,375,18 840,400,35 848,430,25 852,470,30 858,500,20 864,460,20 872,480,20 878,440,25
p 880,500,70 884,600,50 890,690,50 900,740,40 910,700,35 918,740,35 928,800,50 936,790,20 950,740,20 960,780,25 970,840,25 980,870,30 990,865,25 1000,840,30 1010,820,25 1020,825,20 1030,850,20 1045,890,20 1060,890,18 1070,920,20 1085,905,20 1095,950,30 1105,930,20 1120,900,20 1132,885,12 1145,900,15 1160,890,15 1172,880,12
d 1175,870,20 1180,860,25 1186,830,20 1195,840,20 1202,890,25 1206,905,15
p 1208,910,15 1216,890,20 1222,875,15
d 1225,870,12 1234,850,20 1245,870,15 1258,855,20 1270,870,15 1285,855,15 1294,815,15 1305,830,15 1310,850,20
p 1312,920,80 1320,930,50 1330,890,20 1340,880,25 1346,940,40 1352,910,60 1360,850,25 1370,850,20 1380,880,20 1390,920,30 1396,970,50 1400,1090,100 1406,1200,50 1412,1180,60 1420,1150,40 1428,1110,30 1436,1030,40 1444,990,20 1450,970,30
d 1452,920,40 1462,860,30 1468,830,40 1475,870,20 1486,890,15 1495,930,20 1510,935,15 1520,950,20 1533,945,20
p 1535,950,12 1558,945,15 1570,980,15 1580,995,12 1600,1010,15 1615,1045,12 1630,1040,15 1645,1050,15 1656,1065,15 1670,1035,15 1676,1030,25 1690,1060,15 1702,1030,15 1715,1055,15 1726,1070,15 1740,1045,15 1748,1025,12
d 1751,1000,15 1755,990,20 1762,975,15 1775,1000,18 1790,985,20 1798,990,20
b 1800,850,100 1807,900,60 1812,930,40 1816,870,25 1822,840,30 1835,850,20 1845,800,30 1855,790,20 1865,770,20 1875,740,22 1885,750,18 1893,740,25 1900,680,20 1912,655,15 1920,655,20 1928,650,20 1932,610,15 1936,590,10 1945,600,12 1955,630,15 1967,640,10 1978,640,15 1990,670,12 2000,695,15 2010,700,12 2028,690,12
d 2030,710,12 2045,730,15 2060,740,15 2075,735,12 2090,738,15 2105,730,15 2117,735,12 2131,710,15 2138,780,30 2148,770,15 2158,790,18 2165,760,12 2180,745,15 2197,745,12
b 2200,735,15 2205,720,15 2211,700,15`;
let seed = 7;
const rnd = () => (seed = seed * 16807 % 2147483647) / 2147483647;
const paths = { b: '', d: '', p: '' };
runs.trim().split('\n').forEach(line => {
  const [key, ...raw] = line.split(' ');
  const k = raw.map(s => s.split(',').map(Number));
  for (let i = 0; i < k.length - 1; i++) {
    const [x1, m1, h1] = k[i], [x2, m2, h2] = k[i + 1];
    for (let x = x1 + x1 % 2; x < x2; x += 2) {
      const t = (x - x1) / (x2 - x1);
      const mid = m1 + (m2 - m1) * t, half = h1 + (h2 - h1) * t;
      const top = mid - half * (0.2 + rnd() * 1.3), end = mid + half * (0.2 + rnd() * 1.3);
      paths[key] += `M${x}.5 ${top.toFixed(0)}V${end.toFixed(0)}`;
    }
  }
});
// Wicks that reach out to the swing dots
paths.b += 'M50.500 715V760M80.500 770V816M404.500 644V680M513.500 692V720M532.500 676V735M528.500 700V809M628.500 238V290M702.500 290V315M750.500 300V356M770.500 200V247M806.500 256V280M1802.500 738V900M1804.500 773V930M1978.500 600V720M1928.500 640V684M1980.500 617V650M1458.500 831V871M2210.500 685V730';
paths.d += 'M250.500 760V778M526.500 713V829M448.500 760V795M852.500 450V527M877.500 426V470M1184.500 810V860M1234.500 832V870M1292.500 798V830M1270.500 860V895M1468.500 783V860M1520.500 950V985M1533.500 918V950M1778.500 1000V1034M1810.500 940V1040M1760.500 965V990M2060.500 740V760M2112.500 735V758M2131.500 705V730M2156.500 770V815M555.500 820V909';
paths.p += 'M550.500 840V925M930.500 800V959M978.500 870V936M1006.500 763V840M950.500 715V780M1070.500 910V941M1090.500 897V1006M1096.500 920V990M1212.500 880V937M1312.500 799V1061M1314.500 920V1044M1346.500 900V1052M1350.500 900V1025M1340.500 841V900M1362.500 828V890M1404.500 1180V1266M1406.500 1200V1275M1678.500 1000V1140M1680.500 1059V1135M1558.500 935V950M1724.500 1050V1087M1700.500 1003V1040M1654.500 1050V1080';
[['b', '#6cb4e8'], ['d', '#484848'], ['p', '#e80f64']].forEach(([k, stroke]) => add($('bars'), 'path', { d: paths[k], stroke }));
```
